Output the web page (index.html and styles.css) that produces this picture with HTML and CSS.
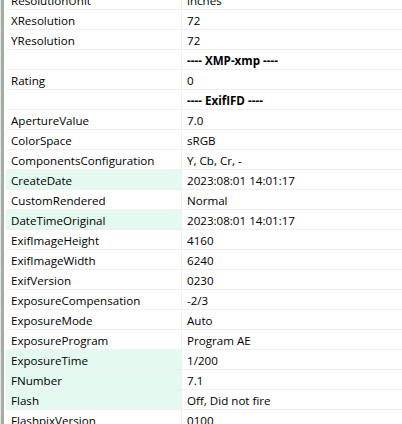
FILE: index.html
```html
<!DOCTYPE html>
<html>
<head>
<meta charset="utf-8">
<link rel="stylesheet" href="styles.css">
</head>
<body>
<div class="frame">
  <div class="edge"></div>
  <div class="grid">
    <div class="row"><div class="name">ResolutionUnit</div><div class="val">inches</div></div>
    <div class="row"><div class="name">XResolution</div><div class="val">72</div></div>
    <div class="row"><div class="name">YResolution</div><div class="val">72</div></div>
    <div class="row"><div class="name"></div><div class="val bold">---- XMP-xmp ----</div></div>
    <div class="row"><div class="name">Rating</div><div class="val">0</div></div>
    <div class="row"><div class="name"></div><div class="val bold">---- ExifIFD ----</div></div>
    <div class="row"><div class="name">ApertureValue</div><div class="val">7.0</div></div>
    <div class="row"><div class="name">ColorSpace</div><div class="val">sRGB</div></div>
    <div class="row"><div class="name">ComponentsConfiguration</div><div class="val">Y, Cb, Cr, -</div></div>
    <div class="row hl"><div class="name">CreateDate</div><div class="val">2023:08:01 14:01:17</div></div>
    <div class="row"><div class="name">CustomRendered</div><div class="val">Normal</div></div>
    <div class="row hl"><div class="name">DateTimeOriginal</div><div class="val">2023:08:01 14:01:17</div></div>
    <div class="row"><div class="name">ExifImageHeight</div><div class="val">4160</div></div>
    <div class="row"><div class="name">ExifImageWidth</div><div class="val">6240</div></div>
    <div class="row"><div class="name">ExifVersion</div><div class="val">0230</div></div>
    <div class="row"><div class="name">ExposureCompensation</div><div class="val">-2/3</div></div>
    <div class="row"><div class="name">ExposureMode</div><div class="val">Auto</div></div>
    <div class="row"><div class="name">ExposureProgram</div><div class="val">Program AE</div></div>
    <div class="row hl"><div class="name">ExposureTime</div><div class="val">1/200</div></div>
    <div class="row hl"><div class="name">FNumber</div><div class="val">7.1</div></div>
    <div class="row hl"><div class="name">Flash</div><div class="val">Off, Did not fire</div></div>
    <div class="row"><div class="name">FlashpixVersion</div><div class="val">0100</div></div>
  </div>
</div>
</body>
</html>
```
FILE: styles.css
```css
html, body {
  margin: 0;
  padding: 0;
  background: #ffffff;
  overflow: hidden;
}
body {
  font-family: "Open Sans", "Noto Sans", "Liberation Sans", sans-serif;
  font-size: 11.6px;
  color: #000;
}
.frame {
  display: flex;
  height: 424px;
  overflow: hidden;
}
.edge {
  flex: none;
  width: 3px;
  border-left: 1px solid #e4e8e4;
  background: #a3ada3;
  margin-right: 2px;
}
.grid {
  flex: 1;
  margin-top: -10px;
}
.row {
  display: grid;
  grid-template-columns: 176px 1fr;
  height: 20px;
  border-bottom: 1px solid #f0f0f0;
  box-sizing: border-box;
}
.name {
  padding: 2px 0 0 5px;
  border-right: 1px solid #f0f0f0;
  line-height: 17px;
  white-space: nowrap;
}
.val {
  padding: 2px 0 0 5px;
  line-height: 17px;
  white-space: nowrap;
}
.hl .name {
  background: #e4f9ef;
}
.bold {
  font-weight: bold;
}
```
